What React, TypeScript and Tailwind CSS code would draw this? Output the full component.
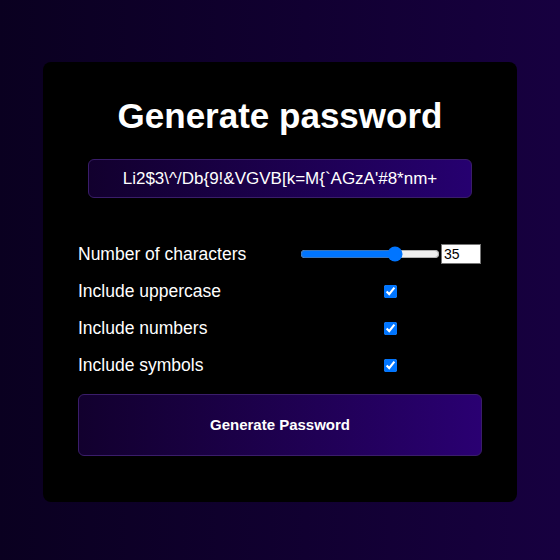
import { useState } from 'react'

const CHARS_UPPER = 'ABCDEFGHIJKLMNOPQRSTUVWXYZ'

export default function App() {
  const [length, setLength] = useState(35)
  const [upper, setUpper] = useState(true)
  const [numbers, setNumbers] = useState(true)
  const [symbols, setSymbols] = useState(true)
  const [password, setPassword] = useState("Li2$3\\^/Db{9!&VGVB[k=M{`AGzA'#8*nm+")

  function generate() {
    let pool = 'abcdefghijklmnopqrstuvwxyz'
    if (upper) pool += CHARS_UPPER
    if (numbers) pool += '0123456789'
    if (symbols) pool += "!@#$%^&*()_+{}[]=`'\\/~"
    let out = ''
    for (let i = 0; i < length; i++) out += pool[Math.floor(Math.random() * pool.length)]
    setPassword(out)
  }

  const rows = [
    { label: 'Include uppercase', value: upper, set: setUpper },
    { label: 'Include numbers', value: numbers, set: setNumbers },
    { label: 'Include symbols', value: symbols, set: setSymbols },
  ]

  return (
    <div className="min-h-screen w-full bg-gradient-to-r from-[#0a0020] to-[#170040] flex justify-center pt-[62px] font-['Liberation_Sans',Arial,sans-serif] text-white">
      <div className="w-[474px] h-[440px] bg-black rounded-lg px-[35px] flex flex-col items-center">
        <h1 className="mt-[34px] text-[35px] leading-[40px] font-bold">Generate password</h1>
        <div className="mt-[23px] w-[384px] h-[39px] rounded-md border border-[#3a1d6a] bg-gradient-to-r from-[#12002e] to-[#260070] flex items-center justify-center text-[17px]">
          {password}
        </div>

        <div className="mt-[45px] w-full flex flex-col gap-[15px]">
          <div className="flex items-center h-[22px]">
            <span className="w-[222px] text-[17.5px]">Number of characters</span>
            <div className="w-[181px] flex items-center">
              <input
                type="range"
                min={0}
                max={50}
                value={length}
                onChange={(e) => setLength(Number(e.target.value))}
                className="w-[141px] h-[16px] m-0 accent-[#0075ff]"
              />
              <input
                type="number"
                value={length}
                onChange={(e) => setLength(Number(e.target.value))}
                className="w-[40px] h-[20px] ml-[1px] bg-white text-black text-[14px] px-[2px] border border-[#767676] outline-none"
              />
            </div>
          </div>
          {rows.map((r) => (
            <div key={r.label} className="flex items-center h-[22px]">
              <span className="w-[222px] text-[17.5px]">{r.label}</span>
              <div className="w-[181px] flex justify-center">
                <input
                  type="checkbox"
                  checked={r.value}
                  onChange={(e) => r.set(e.target.checked)}
                  className="w-[13px] h-[13px] m-0 accent-[#0075ff]"
                />
              </div>
            </div>
          ))}
        </div>

        <button
          onClick={generate}
          className="mt-[18px] w-full h-[62px] rounded-md border border-[#3a1d6a] bg-gradient-to-r from-[#12002e] to-[#2a0072] text-[15px] font-bold text-white"
        >
          Generate Password
        </button>
      </div>
    </div>
  )
}
